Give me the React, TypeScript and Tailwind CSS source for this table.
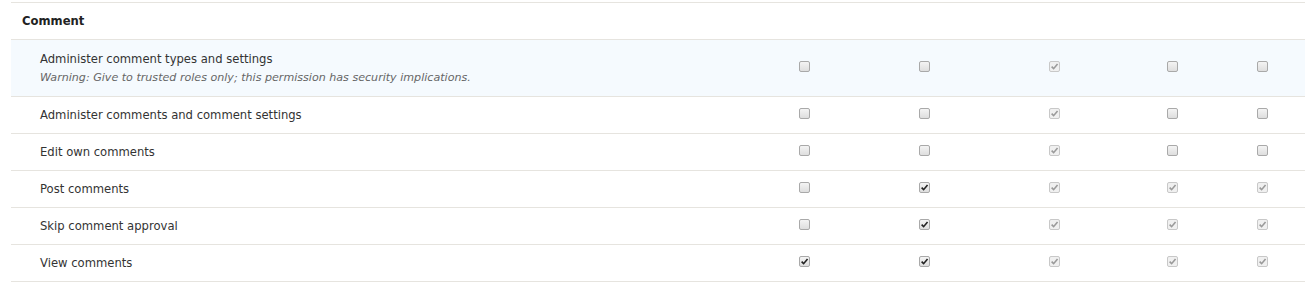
import React from 'react';

type Box = 'off' | 'on' | 'locked';

interface Perm {
  title: string;
  warning?: string;
  boxes: Box[];
}

const PERMS: Perm[] = [
  {
    title: 'Administer comment types and settings',
    warning: 'Warning: Give to trusted roles only; this permission has security implications.',
    boxes: ['off', 'off', 'locked', 'off', 'off'],
  },
  { title: 'Administer comments and comment settings', boxes: ['off', 'off', 'locked', 'off', 'off'] },
  { title: 'Edit own comments', boxes: ['off', 'off', 'locked', 'off', 'off'] },
  { title: 'Post comments', boxes: ['off', 'on', 'locked', 'locked', 'locked'] },
  { title: 'Skip comment approval', boxes: ['off', 'on', 'locked', 'locked', 'locked'] },
  { title: 'View comments', boxes: ['on', 'on', 'locked', 'locked', 'locked'] },
];

const COLS = 'grid grid-cols-[733px_120px_120px_140px_96px_1fr]';

function Check({ state }: { state: Box }) {
  const locked = state === 'locked';
  return (
    <span
      className={
        'inline-flex h-[11px] w-[11px] items-center justify-center rounded-[2px] border ' +
        (locked
          ? 'border-[#c8c8c8] bg-[#f0f0f0]'
          : 'border-[#a9a9a9] bg-gradient-to-b from-[#f4f4f4] to-[#dedede]')
      }
    >
      {state !== 'off' && (
        <svg viewBox="0 0 10 10" className="h-[9px] w-[9px]">
          <path
            d="M1.8 5.2 L4 7.4 L8.4 2.2"
            fill="none"
            stroke={locked ? '#9a9a9a' : '#222'}
            strokeWidth="1.8"
          />
        </svg>
      )}
    </span>
  );
}

export default function App() {
  return (
    <div className="bg-white pt-[2px] pl-[11px] font-['DejaVu_Sans',sans-serif] text-[#333]">
      <div className="border-t border-[#e6e4df]">
        <div className={`${COLS} h-[37px] items-center border-b border-[#e6e4df]`}>
          <div className="pl-[11px] pt-[1px] text-[11.6px] font-bold text-[#222]">Comment</div>
        </div>
        {PERMS.map((p) => (
          <div
            key={p.title}
            className={`${COLS} items-center border-b border-[#e6e4df] ${
              p.warning ? 'h-[57px] bg-[#f5fafe]' : 'h-[37px]'
            }`}
          >
            <div className={p.warning ? 'pl-[29px] pb-[1px]' : 'pl-[29px]'}>
              <div className="text-[11.6px] leading-[16px]">{p.title}</div>
              {p.warning && (
                <div className="mt-[4px] text-[11.1px] italic leading-[14px] text-[#666]">{p.warning}</div>
              )}
            </div>
            {p.boxes.map((b, i) => (
              <div key={i} className="mb-[3px] flex justify-center">
                <Check state={b} />
              </div>
            ))}
          </div>
        ))}
      </div>
    </div>
  );
}
